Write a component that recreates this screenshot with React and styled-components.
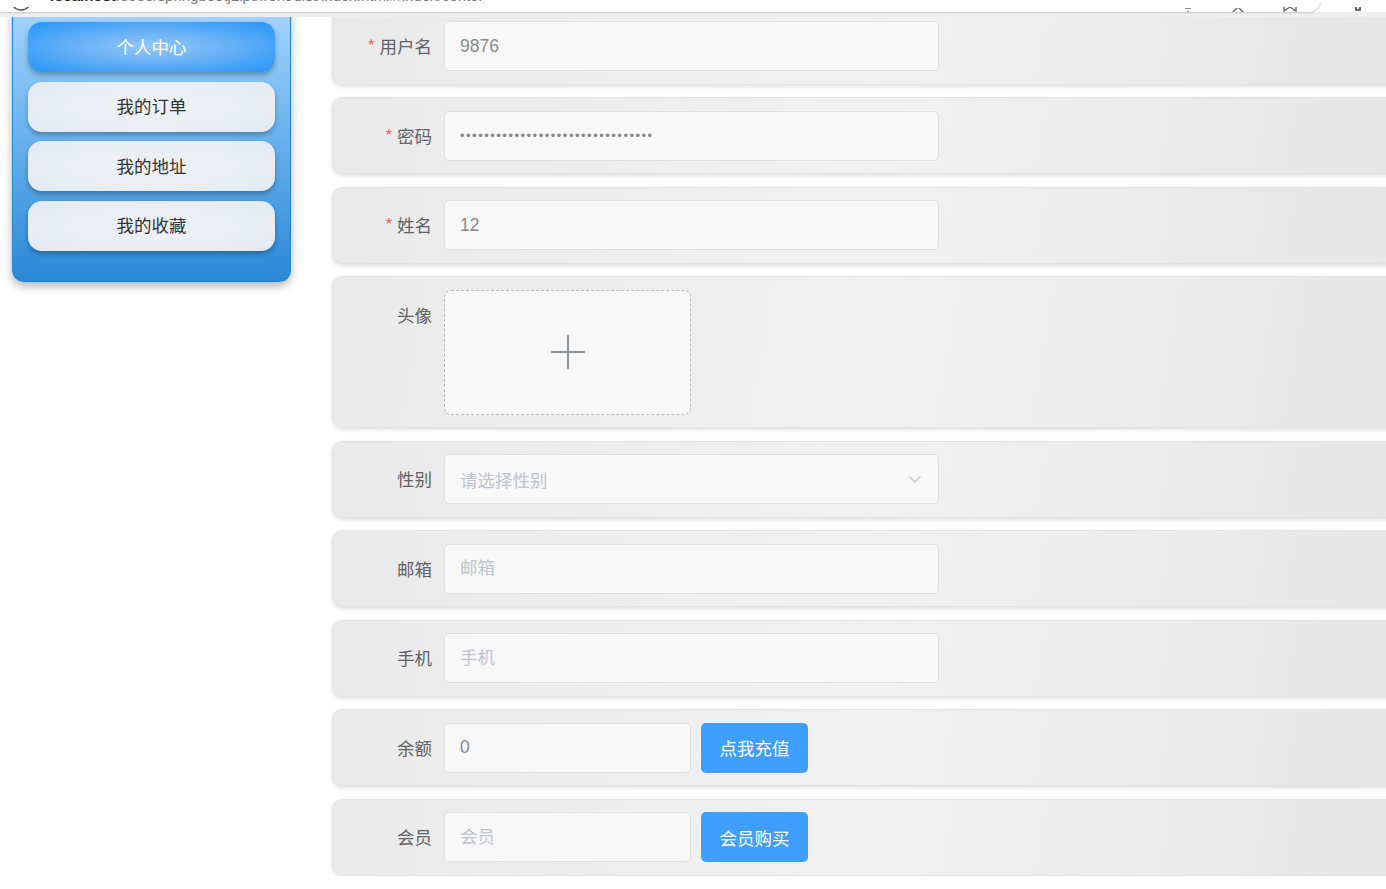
import React from 'react';
import styled, { createGlobalStyle } from 'styled-components';

const GlobalStyle = createGlobalStyle`
  html, body {
    margin: 0;
    padding: 0;
    background: #ffffff;
    overflow: hidden;
    font-family: "Noto Sans CJK SC", "Noto Sans", "Liberation Sans", sans-serif;
  }
  * { box-sizing: border-box; }
`;

// browser chrome, mostly scrolled off the top of the shot
const Chrome = styled.div`
  position: fixed;
  top: 0;
  left: 0;
  right: 0;
  height: 17px;
  background: #ffffff;
  border-bottom: 5px solid #efefef;
  display: flex;
  z-index: 10;
`;

const Omnibox = styled.div`
  width: 1320px;
  height: 12px;
  background: #ffffff;
  border-bottom-right-radius: 12px;
  box-shadow: 1px 1px 2px rgba(0, 0, 0, 0.16);
  overflow: hidden;
  position: relative;
`;

const Url = styled.div`
  position: absolute;
  left: 50px;
  bottom: 9px;
  font-family: "Liberation Sans", sans-serif;
  font-size: 15px;
  line-height: 15px;
  color: #777;
  white-space: nowrap;
  b { color: #222; font-weight: 600; }
`;

const ChromeIcon = styled.svg`
  position: absolute;
  bottom: 0;
  left: ${(p) => p.$x}px;
`;

const Page = styled.div`
  display: flex;
  align-items: flex-start;
  gap: 41px;
  padding-left: 12px;
  width: 1420px;
`;

const Sidebar = styled.nav`
  width: 279px;
  padding: 22px 15px 30px;
  display: flex;
  flex-direction: column;
  gap: 9.5px;
  border-radius: 0 0 12px 12px;
  border: 1px solid #1f86d2;
  border-top: none;
  background: linear-gradient(180deg, #a9d6fb 0%, #6db5ef 45%, #2a88d6 100%);
  box-shadow: 0 4px 10px rgba(0, 0, 0, 0.3);
`;

const NavButton = styled.div`
  height: 50px;
  border-radius: 14px;
  display: flex;
  align-items: center;
  justify-content: center;
  padding-bottom: 2px;
  font-size: 17.5px;
  color: ${(p) => (p.$active ? '#ffffff' : '#333333')};
  background: ${(p) =>
    p.$active
      ? 'radial-gradient(ellipse at center, #93c7f6 0%, #67b0f6 45%, #2196f8 100%)'
      : 'radial-gradient(ellipse at center, #eef2f7 0%, #e9eef4 60%, #e2e9f1 100%)'};
  box-shadow: 0 3px 5px rgba(0, 0, 0, 0.28);
`;

const Main = styled.div`
  flex: 1;
  padding-top: 7.5px;
  display: flex;
  flex-direction: column;
  gap: 12.5px;
`;

const Row = styled.div`
  display: flex;
  align-items: flex-start;
  padding: 12.5px 0;
  border: 1px solid #e2e2e2;
  border-radius: 10px;
  background: linear-gradient(100deg, #eaeaea 0%, #f1f1f1 50%, #e6e6e6 100%);
  box-shadow: 0 2px 4px rgba(0, 0, 0, 0.12);
`;

const Label = styled.label`
  width: 111px;
  padding-right: 12px;
  text-align: right;
  line-height: 50px;
  font-size: 17.5px;
  color: #606266;
  flex-shrink: 0;
  &::before {
    content: ${(p) => (p.$required ? '"*"' : 'none')};
    color: #f56c6c;
    margin-right: 4px;
  }
`;

const Input = styled.input`
  width: ${(p) => (p.$short ? 247 : 495)}px;
  height: 50px;
  padding: 0 18px 0 15px;
  border: 1px solid #dcdfe6;
  border-radius: 5px;
  background: #f8f8f8;
  font-family: "Liberation Sans", "Noto Sans CJK SC", sans-serif;
  font-size: 17.5px;
  color: #8a8a8a;
  outline: none;
  &::placeholder {
    color: #c0c4cc;
    font-family: "Noto Sans CJK SC", sans-serif;
  }
  &[type='password'] {
    font-size: 13px;
    letter-spacing: 1.5px;
    color: #888;
  }
`;

const Select = styled.div`
  width: 495px;
  height: 50px;
  padding: 0 16px 0 15px;
  border: 1px solid #dcdfe6;
  border-radius: 5px;
  background: #f8f8f8;
  display: flex;
  align-items: center;
  justify-content: space-between;
  font-size: 17.5px;
  color: #c0c4cc;
`;

const Upload = styled.div`
  width: 247px;
  height: 125px;
  border: 1px dashed #b9b9b9;
  border-radius: 7px;
  background: #f8f8f8;
  display: flex;
  align-items: center;
  justify-content: center;
`;

const Button = styled.button`
  margin-left: 10px;
  width: 107px;
  height: 50px;
  border: none;
  border-radius: 5px;
  background: #409eff;
  color: #ffffff;
  font-family: "Noto Sans CJK SC", sans-serif;
  font-size: 17.5px;
  cursor: pointer;
`;

const menu = ['个人中心', '我的订单', '我的地址', '我的收藏'];

export default function App() {
  return (
    <>
      <GlobalStyle />
      <Chrome>
        <Omnibox>
          <ChromeIcon $x={10} width="22" height="5" viewBox="0 9 22 5">
            <circle cx="11" cy="2" r="10" fill="none" stroke="#555" strokeWidth="1.5" />
          </ChromeIcon>
          <Url>
            <b>localhost</b>:8080/springbootj2ipt/front/dist/index.html#/index/center
          </Url>
          <ChromeIcon $x={1180} width="16" height="4" viewBox="0 12 16 4">
            <path d="M8 0 V12 M5 12 H11 M8 15 V16" stroke="#666" strokeWidth="1.5" fill="none" />
          </ChromeIcon>
          <ChromeIcon $x={1230} width="16" height="4" viewBox="0 12 16 4">
            <path d="M3 16 L8 11 L13 16" stroke="#666" strokeWidth="1.4" fill="none" />
          </ChromeIcon>
          <ChromeIcon $x={1282} width="16" height="5" viewBox="0 11 16 5">
            <path d="M2 0 V15 L8 11 L14 15 V0" stroke="#666" strokeWidth="1.4" fill="none" />
          </ChromeIcon>
        </Omnibox>
        <ChromeIcon $x={1349} width="18" height="5" viewBox="0 11 18 5">
          <path d="M3 10 H7 V14 H11 V10 H15" stroke="#444" strokeWidth="1.6" fill="none" />
        </ChromeIcon>
      </Chrome>

      <Page>
        <Sidebar>
          {menu.map((m, i) => (
            <NavButton key={m} $active={i === 0}>
              {m}
            </NavButton>
          ))}
        </Sidebar>

        <Main>
          <Row>
            <Label $required>用户名</Label>
            <Input defaultValue="9876" />
          </Row>
          <Row>
            <Label $required>密码</Label>
            <Input type="password" defaultValue="12345678901234567890123456789012" />
          </Row>
          <Row>
            <Label $required>姓名</Label>
            <Input defaultValue="12" />
          </Row>
          <Row>
            <Label>头像</Label>
            <Upload>
              <svg width="36" height="36" viewBox="0 0 36 36">
                <path d="M18 1 V35 M1 18 H35" stroke="#8c939d" strokeWidth="2" fill="none" />
              </svg>
            </Upload>
          </Row>
          <Row>
            <Label>性别</Label>
            <Select>
              <span>请选择性别</span>
              <svg width="14" height="14" viewBox="0 0 14 14">
                <path d="M1.5 4.5 L7 10 L12.5 4.5" stroke="#c0c4cc" strokeWidth="1.3" fill="none" />
              </svg>
            </Select>
          </Row>
          <Row>
            <Label>邮箱</Label>
            <Input placeholder="邮箱" />
          </Row>
          <Row>
            <Label>手机</Label>
            <Input placeholder="手机" />
          </Row>
          <Row>
            <Label>余额</Label>
            <Input $short defaultValue="0" />
            <Button>点我充值</Button>
          </Row>
          <Row>
            <Label>会员</Label>
            <Input $short placeholder="会员" />
            <Button>会员购买</Button>
          </Row>
        </Main>
      </Page>
    </>
  );
}
